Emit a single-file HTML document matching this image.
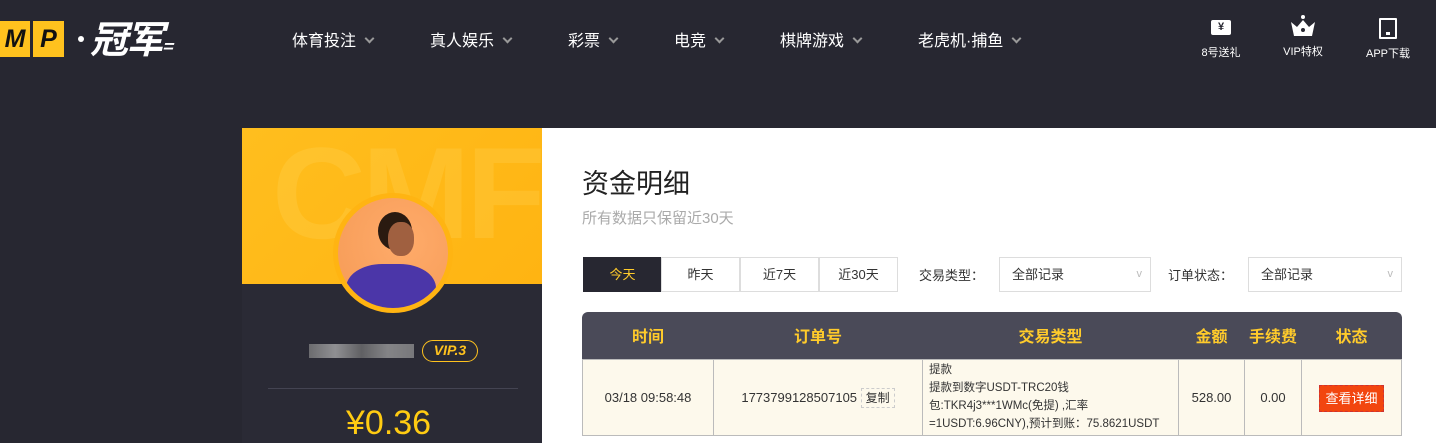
<!DOCTYPE html>
<html><head><meta charset="utf-8"><style>
*{margin:0;padding:0;box-sizing:border-box}
html,body{width:1436px;height:443px;overflow:hidden}
body{background:#272731;font-family:"Liberation Sans","Noto Sans CJK SC",sans-serif;position:relative}
.abs{position:absolute}
.nav{top:27px;color:#fff;font-size:16px;white-space:nowrap}
.nav i{display:inline-block;width:7px;height:7px;border-right:2px solid #999;border-bottom:2px solid #999;transform:rotate(45deg);margin-left:10px;position:relative;top:-4px}
.ic{color:#fff;font-size:11px;text-align:center;width:60px}
.left{left:242px;top:128px;width:300px;height:315px;background:#2a2a35;overflow:hidden}
.yel{left:0;top:0;width:300px;height:156px;background:linear-gradient(135deg,#ffbe1e,#ffb412);overflow:hidden}
.right{left:542px;top:128px;width:894px;height:315px;background:#fff;overflow:hidden}
.btn{top:129px;height:35px;width:79px;border:1px solid #ddd;text-align:center;line-height:33px;font-size:13px;color:#333}
.sel{top:129px;height:35px;border:1px solid #ddd;font-size:13px;color:#333;line-height:33px;padding-left:12px}
.sel:after{content:"v";position:absolute;right:8px;top:0;color:#bbb;font-size:11px}
table{border-collapse:collapse;position:absolute;left:40px;top:184px;width:820px;font-size:13px}
th{color:#ffcb2b;height:47px;font-size:16px;font-weight:bold}
td{background:#fdf9ec;border:1px solid #bbb;text-align:center;color:#333;height:76px}
</style></head><body>
<div class="abs" style="left:0;top:21px;width:68px;height:36px;">
 <div class="abs" style="left:0;top:0;width:30px;height:36px;background:#ffc21e;color:#111;font:italic bold 25px 'Liberation Sans';line-height:36px;text-align:center">M</div>
 <div class="abs" style="left:30px;top:0;width:34px;height:36px;background:#ffc21e;border-left:3px solid #272731;color:#111;font:italic bold 25px 'Liberation Sans';line-height:36px;text-align:center">P</div>
</div>
<div class="abs" style="left:78px;top:36px;width:6px;height:6px;border-radius:50%;background:#fff"></div>
<div class="abs" style="left:90px;top:14px;color:#fff;font:italic bold 38px 'Noto Sans CJK SC',sans-serif;letter-spacing:-2px;line-height:46px">冠军<span style="font-size:18px">=</span></div>
<div class="abs nav" style="left:292px">体育投注<i></i></div>
<div class="abs nav" style="left:430px">真人娱乐<i></i></div>
<div class="abs nav" style="left:568px">彩票<i></i></div>
<div class="abs nav" style="left:674px">电竞<i></i></div>
<div class="abs nav" style="left:780px">棋牌游戏<i></i></div>
<div class="abs nav" style="left:918px">老虎机·捕鱼<i></i></div>
<div class="abs ic" style="left:1191px;top:20px"><div style="margin:0 auto 9px;width:20px;height:15px;background:#fff;color:#272731;font-size:11px;font-weight:bold;line-height:15px;border-radius:2px">¥</div>8号送礼</div>
<div class="abs ic" style="left:1273px;top:15px"><svg width="26" height="22" viewBox="0 0 26 22" style="display:block;margin:0 auto 6px"><circle cx="13" cy="2" r="2" fill="#fff"/><path d="M1 7 L7 12 L13 5 L19 12 L25 7 L22 21 L4 21Z" fill="#fff"/><circle cx="13" cy="15" r="2" fill="#272731"/></svg>VIP特权</div>
<div class="abs ic" style="left:1358px;top:18px"><div style="margin:0 auto 6px;width:18px;height:21px;border:2.5px solid #fff;border-radius:1px;position:relative"><div style="position:absolute;left:5px;bottom:2px;width:4px;height:3px;background:#fff"></div></div>APP下载</div>

<div class="abs left">
 <div class="abs yel"><div class="abs" style="left:30px;top:-10px;font:bold 130px 'Liberation Sans';color:rgba(255,225,120,.18);letter-spacing:-4px">CMF</div></div>
 <div class="abs" style="left:91px;top:65px;width:120px;height:120px;border-radius:50%;background:#ffb412;"></div>
 <div class="abs" style="left:96px;top:70px;width:110px;height:110px;border-radius:50%;background:radial-gradient(circle at 60% 40%,#ffab6a,#f59a55);overflow:hidden">
  <div class="abs" style="left:40px;top:14px;width:34px;height:38px;border-radius:50%;background:#2a1a10"></div>
  <div class="abs" style="left:50px;top:24px;width:26px;height:34px;border-radius:45%;background:#a06040"></div>
  <div class="abs" style="left:8px;top:66px;width:90px;height:60px;border-radius:40% 40% 0 0;background:#4b36a8"></div>
 </div>
 <div class="abs" style="left:67px;top:216px;width:105px;height:14px;background:linear-gradient(90deg,#888,#bbb,#777,#aaa,#999);opacity:.7"></div>
 <div class="abs" style="left:180px;top:212px;width:56px;height:22px;border:1.5px solid #ffc21e;border-radius:11px;color:#ffc21e;font:italic bold 14px 'Liberation Sans';text-align:center;line-height:19px">VIP.3</div>
 <div class="abs" style="left:26px;top:260px;width:250px;height:1px;background:#444452"></div>
 <div class="abs" style="left:104px;top:276px;color:#ffcb12;font-size:34px;line-height:38px">¥0.36</div>
</div>

<div class="abs right">
 <div class="abs" style="left:40px;top:34px;font-size:27px;color:#222">资金明细</div>
 <div class="abs" style="left:40px;top:79px;font-size:15px;color:#aaa">所有数据只保留近30天</div>
 <div class="abs btn" style="left:41px;background:#272731;color:#ffcb2b;border-color:#272731">今天</div>
 <div class="abs btn" style="left:119px">昨天</div>
 <div class="abs btn" style="left:198px">近7天</div>
 <div class="abs btn" style="left:277px">近30天</div>
 <div class="abs" style="left:377px;top:137px;font-size:13px;color:#333">交易类型：</div>
 <div class="abs sel" style="left:457px;width:152px">全部记录</div>
 <div class="abs" style="left:626px;top:137px;font-size:13px;color:#333">订单状态：</div>
 <div class="abs sel" style="left:706px;width:154px">全部记录</div>
 <div class="abs" style="left:40px;top:184px;width:820px;height:47px;background:#4a4a58;border-radius:6px 6px 0 0"></div>
 <table>
  <tr><th style="width:131px">时间</th><th style="width:209px">订单号</th><th style="width:256px">交易类型</th><th style="width:66px">金额</th><th style="width:57px">手续费</th><th>状态</th></tr>
  <tr><td>03/18 09:58:48</td><td>1773799128507105 <span style="border:1px dashed #ccc;padding:2px 4px;font-size:12px">复制</span></td>
  <td style="text-align:left;font-size:11.5px;line-height:18px;padding-left:6px">提款<br>提款到数字USDT-TRC20钱<br>包:TKR4j3***1WMc(免提) ,汇率<br>=1USDT:6.96CNY),预计到账：75.8621USDT</td>
  <td>528.00</td><td>0.00</td><td><span style="background:#f2460f;color:#fff;padding:5px 5px;font-size:13px;border:1px dashed #c33">查看详细</span></td></tr>
 </table>
</div>
</body></html>
